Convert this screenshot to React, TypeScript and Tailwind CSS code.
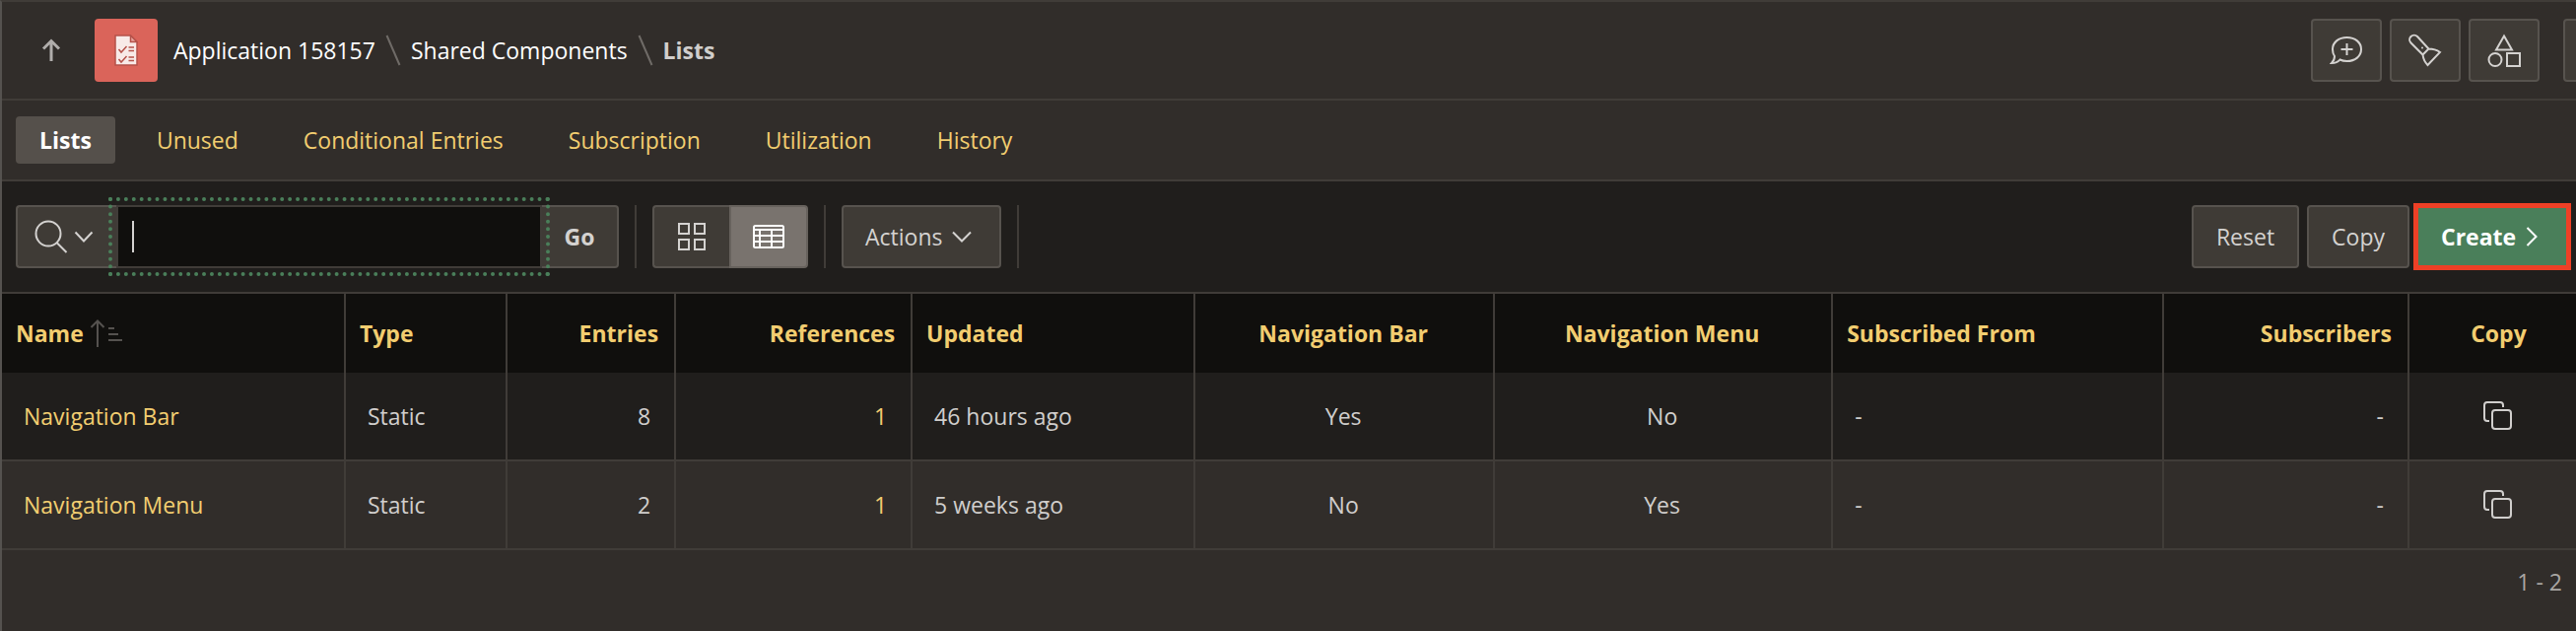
import type { ReactNode } from "react";

type Align = "left" | "right" | "center";

const alignClass: Record<Align, string> = {
  left: "text-left",
  right: "text-right",
  center: "text-center",
};

const columns: { label: string; align: Align; width: string }[] = [
  { label: "Name", align: "left", width: "w-[13.36%]" },
  { label: "Type", align: "left", width: "w-[6.28%]" },
  { label: "Entries", align: "right", width: "w-[6.55%]" },
  { label: "References", align: "right", width: "w-[9.19%]" },
  { label: "Updated", align: "left", width: "w-[10.99%]" },
  { label: "Navigation Bar", align: "center", width: "w-[11.64%]" },
  { label: "Navigation Menu", align: "center", width: "w-[13.13%]" },
  { label: "Subscribed From", align: "left", width: "w-[12.86%]" },
  { label: "Subscribers", align: "right", width: "w-[9.53%]" },
];

const rows = [
  ["Navigation Bar", "Static", "8", "1", "46 hours ago", "Yes", "No", "-", "-"],
  ["Navigation Menu", "Static", "2", "1", "5 weeks ago", "No", "Yes", "-", "-"],
];

const tabs = ["Lists", "Unused", "Conditional Entries", "Subscription", "Utilization", "History"];

function Icon({ width, height, children, className = "" }: { width: number; height: number; children: ReactNode; className?: string }) {
  return (
    <svg viewBox={`0 0 ${width} ${height}`} width={width} height={height} fill="none" stroke="currentColor" strokeWidth="2" className={`shrink-0 ${className}`} aria-hidden="true">
      {children}
    </svg>
  );
}

function ToolButton({ label, children, className = "" }: { label: string; children?: ReactNode; className?: string }) {
  return (
    <button type="button" aria-label={label} className={`flex h-16 w-[72px] shrink-0 items-center justify-center rounded border-2 border-[#57534e] bg-[#3f3b36] text-[#d4d2d0] ${className}`}>
      {children}
    </button>
  );
}

function Slash() {
  return (
    <Icon width={16} height={32} className="mx-[10px] text-[#6f6b67]">
      <path d="M1.5 1 14.5 31" />
    </Icon>
  );
}

function Divider() {
  return <div className="h-16 w-0.5 bg-[#403c38]" />;
}

export default function App() {
  return (
    <div className="min-h-screen overflow-hidden border-l-2 border-t-2 border-l-[#55524f] border-t-[#403c38] bg-[#312d2a] font-['Open_Sans','Noto_Sans',sans-serif] text-[23px] leading-8 text-[#d0cecc]">
      <header className="flex h-[100px] items-center justify-between border-b-2 border-[#403c38]">
        <nav aria-label="Breadcrumb" className="flex items-center pl-[39px] text-white">
          <a href="#up" aria-label="Up" className="text-[#b0adab]">
            <Icon width={22} height={24}>
              <path d="M11 23V3M3 10.5 11 2.5l8 8" strokeWidth="3" />
            </Icon>
          </a>
          <div className="ml-[33px] mr-4 flex size-16 items-center justify-center rounded bg-[#da645a]">
            <Icon width={24} height={32}>
              <path d="M1 1h15.500l6.500 6.500V31H1z" fill="#f8eae8" stroke="#b5524a" strokeWidth="1.5" />
              <path d="M16.500 1v6.500H23z" fill="#e9a59f" stroke="#b5524a" strokeWidth="1.5" />
              <path d="m4.500 15 2.500 3 5.500-6M14.500 13h5.500M14.500 16.500h5.500M4.500 25l2.500 3 5.500-6M14.500 23h5.500M14.500 26.500h5.500" stroke="#b5524a" strokeWidth="1.5" />
            </Icon>
          </div>
          <a href="#application">Application 158157</a>
          <Slash />
          <a href="#shared">Shared Components</a>
          <Slash />
          <span className="font-bold text-[#d0cecc]">Lists</span>
        </nav>
        <div className="flex gap-2">
          <ToolButton label="Feedback">
            <Icon width={34} height={30}>
              <path d="M17.500 2C26 2 32 7 32 14s-6 12-14.500 12c-3 0-5-.5-7-1.500-2 2.500-5 3.500-8.500 3.500 2-2 3-4 3-7C3.500 19 3 17 3 14 3 7 9 2 17.500 2zM17.500 8v12M11.500 14h12" />
            </Icon>
          </ToolButton>
          <ToolButton label="Search">
            <Icon width={34} height={34}>
              <path d="M2.500 9.500a4.500 4.500 0 0 1 6.500-6.500l11.500 12.500-6 6zM20.500 15.500c4 0 8 1 11.500 3.500L19.500 32c-3-3-4.500-6.500-5-10.500" />
              <circle cx="14" cy="14.5" r="1" fill="currentColor" stroke="none" />
            </Icon>
          </ToolButton>
          <ToolButton label="Shared components">
            <Icon width={34} height={34}>
              <path d="M17 2.500 25 16.500H9zM20 20h13v13H20z" />
              <circle cx="8" cy="26.5" r="6.5" />
            </Icon>
          </ToolButton>
          <ToolButton label="More" className="-mr-[59px] ml-4" />
        </div>
      </header>

      <nav aria-label="Sections" className="flex h-[82px] items-center gap-[18px] border-b-2 border-[#403c38] px-[14px]">
        {tabs.map((tab, i) => (
          <a key={tab} href={`#tab-${i}`} className={`rounded px-6 py-2 ${i === 0 ? "bg-[#55504b] font-bold text-white" : "text-[#f2cd70]"}`}>
            {tab}
          </a>
        ))}
      </nav>

      <div className="flex h-[114px] items-center justify-between border-b-2 border-[#403c38] bg-[#201e1c] pl-[14px] pr-[5px]">
        <div className="flex items-center gap-4">
          <div className="flex">
            <button type="button" aria-label="Search columns" className="flex h-16 w-[102px] items-center gap-[6px] rounded-l border-2 border-r-0 border-[#57534e] bg-[#3f3b36] pl-[17px] text-[#d4d2d0]">
              <Icon width={34} height={34}>
                <circle cx="14" cy="14" r="12.5" />
                <path d="m22.500 23 10 10" />
              </Icon>
              <Icon width={20} height={12}>
                <path d="m1.500 1.500 8.500 9 8.500-9" />
              </Icon>
            </button>
            <div className="relative">
              <input type="text" aria-label="Search lists" className="h-16 w-[432px] border-2 border-[#403c38] bg-[#100f0d] px-[14px] text-white outline-4 outline-offset-4 outline-dotted outline-[#4a7f5a]" />
              <span className="absolute left-4 top-4 h-8 w-0.5 bg-[#d4d2d0]" />
            </div>
            <button type="button" className="h-16 w-[78px] rounded-r border-2 border-l-0 border-[#57534e] bg-[#3f3b36] font-bold text-[#d4d2d0]">
              Go
            </button>
          </div>
          <Divider />
          <div className="flex">
            <button type="button" aria-label="Icon view" className="flex h-16 w-[78px] items-center justify-center rounded-l border-2 border-r-0 border-[#57534e] bg-[#3f3b36] text-[#d4d2d0]">
              <Icon width={28} height={28}>
                <path d="M1 1h10v10H1zM17 1h10v10H17zM1 17h10v10H1zM17 17h10v10H17z" />
              </Icon>
            </button>
            <button type="button" aria-label="Report view" aria-pressed="true" className="flex h-16 w-20 items-center justify-center rounded-r border-2 border-[#67625d] bg-[#79736e] text-white">
              <Icon width={32} height={24}>
                <rect x="1" y="1" width="30" height="22" rx="1.5" />
                <path d="M1 5h30M1 11h30M1 17h30M7 5v18M19 5v18" />
              </Icon>
            </button>
          </div>
          <Divider />
          <button type="button" className="flex h-16 items-center gap-[10px] rounded border-2 border-[#57534e] bg-[#3f3b36] pl-[22px] pr-7 text-[#d4d2d0]">
            Actions
            <Icon width={20} height={12}>
              <path d="m1 1.500 9 9 9-9" />
            </Icon>
          </button>
          <Divider />
        </div>
        <div className="flex items-center gap-2">
          <button type="button" className="h-16 rounded border-2 border-[#57534e] bg-[#3f3b36] px-[23px] text-[#d4d2d0]">
            Reset
          </button>
          <button type="button" className="-mr-1 h-16 rounded border-2 border-[#57534e] bg-[#3f3b36] px-[23px] text-[#d4d2d0]">
            Copy
          </button>
          <button type="button" className="flex h-[68px] w-[160px] items-center gap-[10px] border-[5px] border-[#ee4026] bg-[#4a7f5a] pl-[23px] font-bold text-white">
            Create
            <Icon width={12} height={20}>
              <path d="m1.500 1 9 9-9 9" />
            </Icon>
          </button>
        </div>
      </div>

      <table className="w-full table-fixed border-separate border-spacing-0">
        <thead className="bg-[#100f0d] text-[#f2cd70]">
          <tr>
            {columns.map((c) => (
              <th key={c.label} scope="col" className={`h-20 border-r-2 border-[#403c38] pl-[14px] pr-4 font-bold ${c.width} ${alignClass[c.align]}`}>
                {c.label === "Name" ? (
                  <span className="flex items-center gap-[6px]">
                    Name
                    <Icon width={34} height={28} className="text-[#55524f]">
                      <path d="M8 28V1.500M1.500 8 8 1.500l6.500 6.500M19 9h6M19 15h10M19 21h14" />
                    </Icon>
                  </span>
                ) : (
                  c.label
                )}
              </th>
            ))}
            <th scope="col" className="pl-4 pr-1 text-center font-bold">
              Copy
            </th>
          </tr>
        </thead>
        <tbody>
          {rows.map((row) => (
            <tr key={row[0]} className="odd:bg-[#201e1c]">
              {row.map((cell, i) => (
                <td key={columns[i].label} className={`h-[90px] border-b-2 border-r-2 border-[#403c38] pl-[22px] pr-6 ${alignClass[columns[i].align]}`}>
                  {i === 0 || i === 3 ? (
                    <a href={`#${columns[i].label}`} className="text-[#f2cd70]">
                      {cell}
                    </a>
                  ) : (
                    cell
                  )}
                </td>
              ))}
              <td className="border-b-2 border-[#403c38] pl-4 pr-1">
                <button type="button" aria-label={`Copy ${row[0]}`} className="mx-auto block">
                  <Icon width={30} height={30}>
                    <rect x="9" y="9" width="19" height="19" rx="3" />
                    <path d="M6 20H4a3 3 0 0 1-3-3V4a3 3 0 0 1 3-3h13a3 3 0 0 1 3 3v2" />
                  </Icon>
                </button>
              </td>
            </tr>
          ))}
        </tbody>
      </table>

      <div className="flex justify-end px-[14px] py-4 text-[#a9a6a3]">1 - 2</div>
    </div>
  );
}
